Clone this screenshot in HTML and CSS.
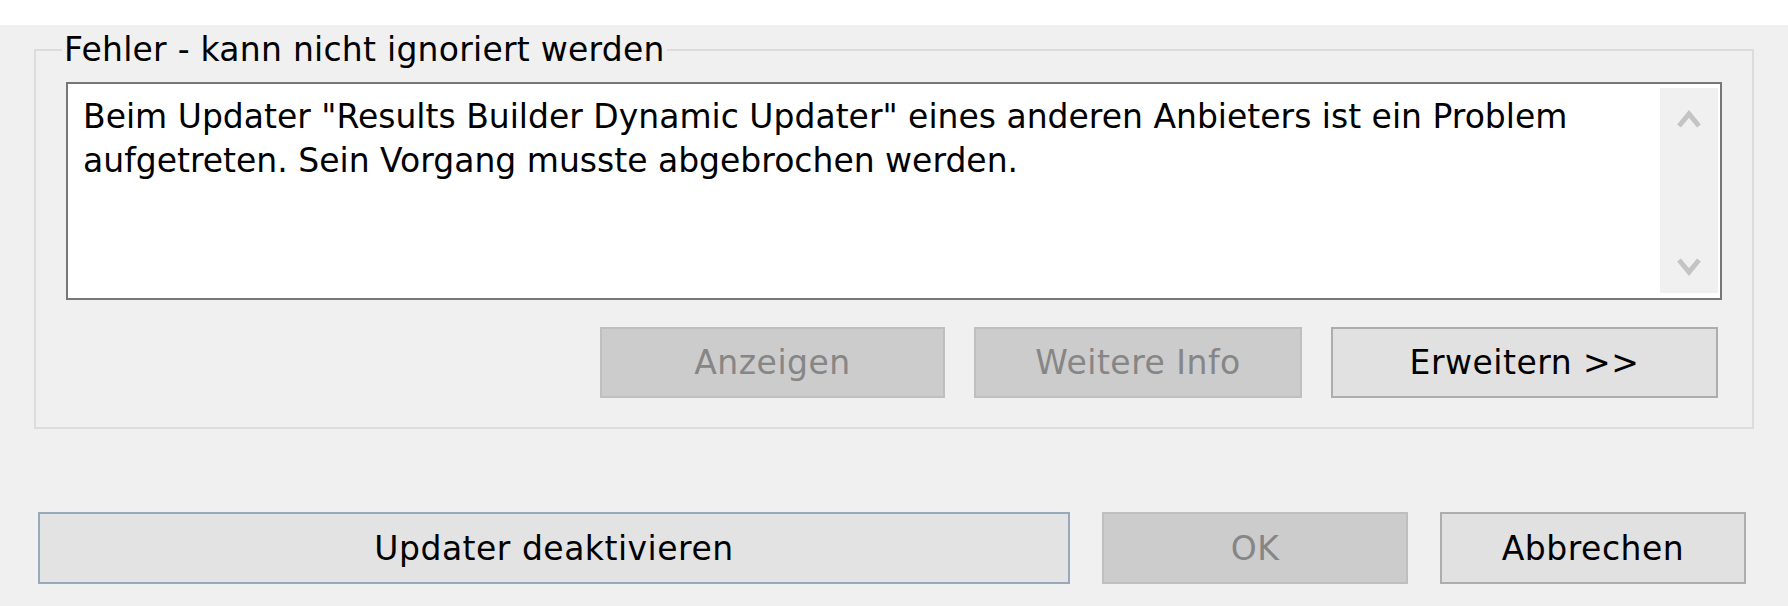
FILE: index.html
```html
<!DOCTYPE html>
<html lang="de">
<head>
  <meta charset="UTF-8" />
  <title>Fehler - Updater</title>
  <link rel="stylesheet" href="styles.css">
</head>
<body>
  <div class="top-band"></div>
  <div class="dialog">
    <fieldset class="group">
      <legend>Fehler - kann nicht ignoriert werden</legend>
      <div class="message-box">
        <div class="message-text">Beim Updater "Results Builder Dynamic Updater" eines anderen Anbieters ist ein Problem aufgetreten. Sein Vorgang musste abgebrochen werden.</div>
        <div class="scrollbar">
          <svg class="arrow" viewBox="0 0 26 22"><path d="M3 18 L13 6 L23 18" /></svg>
          <svg class="arrow" viewBox="0 0 26 22"><path d="M3 4 L13 16 L23 4" /></svg>
        </div>
      </div>
      <div class="group-buttons">
        <button class="btn disabled btn-show">Anzeigen</button>
        <button class="btn disabled btn-info">Weitere Info</button>
        <button class="btn btn-expand">Erweitern &gt;&gt;</button>
      </div>
    </fieldset>

    <div class="dialog-buttons">
      <button class="btn default btn-disable">Updater deaktivieren</button>
      <button class="btn disabled btn-ok">OK</button>
      <button class="btn btn-cancel">Abbrechen</button>
    </div>
  </div>
</body>
</html>
```

FILE: styles.css
```css
* {
  box-sizing: border-box;
}
body {
  margin: 0;
  background-color: #f0f0f0;
  font-family: 'DejaVu Sans', 'Liberation Sans', sans-serif;
  font-size: 33px;
  color: #000;
}
.top-band {
  height: 25px;
  background-color: #fff;
}
.dialog {
  padding: 5px 34px 0 34px;
}
.group {
  margin: 0;
  padding: 0 30px 29px 30px;
  border: 2px solid #dcdcdc;
}
.group legend {
  margin-left: -4px;
  padding: 0 2px;
  line-height: 40px;
  letter-spacing: 0.25px;
}
.message-box {
  margin-top: 12px;
  height: 218px;
  background-color: #fff;
  border: 2px solid #777;
  display: flex;
  padding: 4px 2px 5px 0;
}
.message-text {
  flex: 1;
  padding: 7px 40px 0 15px;
  line-height: 44px;
}
.scrollbar {
  width: 58px;
  background-color: #f0f0f0;
  display: flex;
  flex-direction: column;
  justify-content: space-between;
  align-items: center;
  padding: 20px 0 15px 0;
}
.arrow {
  width: 26px;
  height: 22px;
}
.arrow path {
  fill: none;
  stroke: #c4c4c4;
  stroke-width: 5;
}
.group-buttons {
  display: flex;
  justify-content: flex-end;
  gap: 29px;
  margin-top: 27px;
  margin-right: 4px;
}
.btn {
  height: 71px;
  font-family: inherit;
  font-size: 33px;
  letter-spacing: 0.5px;
  background-color: #e1e1e1;
  border: 2px solid #adadad;
  color: #000;
  padding: 0;
}
.btn.disabled {
  background-color: #cccccc;
  border-color: #bfbfbf;
  color: #868686;
}
.btn.default {
  background-color: #e3e3e3;
  border-color: #98a9bb;
}
.btn-show { width: 345px; }
.btn-info { width: 328px; }
.btn-expand { width: 387px; }
.dialog-buttons {
  display: flex;
  gap: 32px;
  margin-top: 83px;
  padding-left: 4px;
}
.btn-disable { width: 1032px; height: 72px; }
.btn-ok { width: 306px; height: 72px; }
.btn-cancel { width: 306px; height: 72px; }
```
